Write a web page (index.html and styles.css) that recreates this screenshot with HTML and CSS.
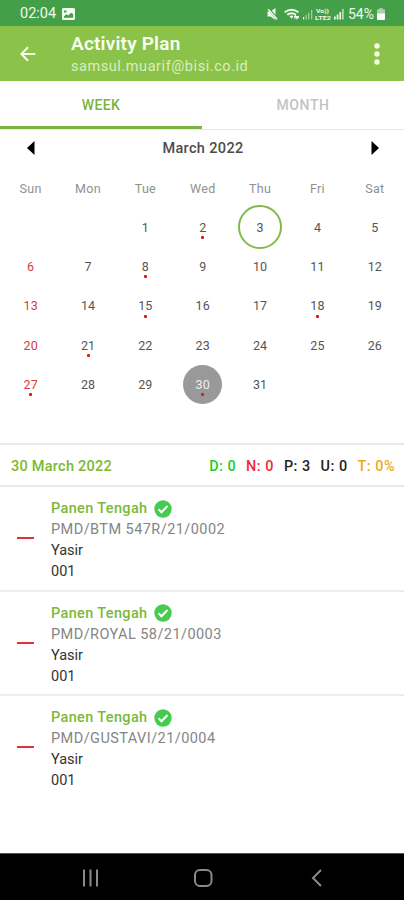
FILE: index.html
```html
<!DOCTYPE html>
<html lang="en">
<head>
<meta charset="utf-8">
<title>Activity Plan</title>
<link rel="stylesheet" href="styles.css">
</head>
<body>
<div class="screen">
  <div class="status">
    <span class="clock">02:04</span>
    <svg class="pic" width="13" height="12" viewBox="0 0 13 12"><path fill="#f4fff2" fill-rule="evenodd" d="M1.5 0h10A1.5 1.5 0 0 1 13 1.5v9a1.5 1.5 0 0 1-1.500 1.500h-10A1.500 1.500 0 0 1 0 10.500v-9A1.500 1.500 0 0 1 1.500 0zM2 9.800h9.200V6L9 4.800 6.300 7.500 4.500 6.300 2 8.300zM2 2.400v2h2.500v-2z"/></svg>
    <svg class="indicators" width="80" height="14" viewBox="0 0 80 14">
      <g fill="#f0faee">
        <path d="M.5 4.500h3L8.500 1v12L3.500 9.500h-3z"/>
        <path d="M17 4.500Q24.500-1 32 4.500L30.800 6Q24.500 1.600 18.200 6zM19.500 7Q24.500 3.400 29.500 7L28 8.500Q24.500 6 21 8.500zM22.500 9.200Q24.500 7.800 26.500 9.200L24.500 11.800z"/>
        <path d="M26.500 10l2.500-2.500V9h3v1.800zM32 10.500l-2.500 2.300v-1.300H27v-1z"/>
        <path d="M36 10h1.200v2.500H36z"/>
        <path opacity=".55" d="M38.500 8h1.300v4.500h-1.300zM41 5.500h1.300v7H41zM44 3h1.300v9.500H44z"/>
        <path d="M67 9.500h1.700v3H67zM69.700 7.500h1.700v5h-1.700z"/>
        <path d="M72.400 5h1.700v7.500h-1.700z"/>
        <path opacity=".65" d="M75.100 2h1.700v10.500h-1.700z"/>
        <text x="49" y="5.800" class="net" textLength="13" lengthAdjust="spacingAndGlyphs">Vo))</text>
        <text x="48" y="13" class="net" textLength="16" lengthAdjust="spacingAndGlyphs">LTE2</text>
      </g>
      <path d="M1 1.200l9.500 11" stroke="#43a047" stroke-width="2.600"/>
      <path d="M1.200 2.200l9 10" stroke="#f0faee" stroke-width="1.300"/>
    </svg>
    <span class="percent">54%</span>
    <svg class="battery" width="8" height="12" viewBox="0 0 8 12"><path fill="#a9d2a8" d="M2.500 0h3v1.300H7a1 1 0 0 1 1 1V6H0V2.300a1 1 0 0 1 1-1h1.500z"/><path fill="#fff" d="M0 5.500h8V11a1 1 0 0 1-1 1H1a1 1 0 0 1-1-1z"/></svg>
  </div>

  <header class="appbar">
    <svg class="back" width="16" height="16" viewBox="0 0 16 16"><path d="M15.300 8H1.500M8 1.300L1.300 8 8 14.700" fill="none" stroke="#f6ffe9" stroke-width="2"/></svg>
    <div class="heading">
      <h1>Activity Plan</h1>
      <p>samsul.muarif@bisi.co.id</p>
    </div>
    <svg class="more" width="6" height="22" viewBox="0 0 6 22"><g fill="#f6ffe9"><circle cx="3" cy="3" r="2.700"/><circle cx="3" cy="11" r="2.700"/><circle cx="3" cy="19" r="2.700"/></g></svg>
  </header>

  <nav class="tabs"><div class="tab active"><span>WEEK</span></div><div class="tab"><span>MONTH</span></div></nav>

  <div class="monthbar">
    <svg width="8" height="14" viewBox="0 0 8 14"><path d="M7.500 0v14L0 7z"/></svg>
    <span class="month">March 2022</span>
    <svg width="8" height="14" viewBox="0 0 8 14"><path d="M.5 0v14L8 7z"/></svg>
  </div>

  <div class="weekdays"><span>Sun</span><span>Mon</span><span>Tue</span><span>Wed</span><span>Thu</span><span>Fri</span><span>Sat</span></div>
  <div class="days">
    <div></div><div></div><div>1</div><div class="dot">2</div><div class="today">3</div><div>4</div><div>5</div>
    <div class="sun">6</div><div>7</div><div class="dot">8</div><div>9</div><div>10</div><div>11</div><div>12</div>
    <div class="sun">13</div><div>14</div><div class="dot">15</div><div>16</div><div>17</div><div class="dot">18</div><div>19</div>
    <div class="sun">20</div><div class="dot">21</div><div>22</div><div>23</div><div>24</div><div>25</div><div>26</div>
    <div class="sun dot">27</div><div>28</div><div>29</div><div class="dot selected">30</div><div>31</div><div></div><div></div>
  </div>

  <div class="summary">
    <span class="date">30 March 2022</span>
    <div class="counts"><span class="d">D: 0</span><span class="n">N: 0</span><span>P: 3</span><span>U: 0</span><span class="t">T: 0%</span></div>
  </div>

  <ul class="list">
    <li>
      <i class="dash"></i>
      <div class="info">
        <div class="name"><span>Panen Tengah</span><svg width="18" height="18" viewBox="0 0 18 18"><circle cx="9" cy="9" r="8.700" fill="#45cc50"/><path d="M4.500 9.300l3 3 6-6.300" fill="none" stroke="#fff" stroke-width="2"/></svg></div>
        <div class="code">PMD/BTM 547R/21/0002</div>
        <div class="person">Yasir</div>
        <div class="num">001</div>
      </div>
    </li>
    <li>
      <i class="dash"></i>
      <div class="info">
        <div class="name"><span>Panen Tengah</span><svg width="18" height="18" viewBox="0 0 18 18"><circle cx="9" cy="9" r="8.700" fill="#45cc50"/><path d="M4.500 9.300l3 3 6-6.300" fill="none" stroke="#fff" stroke-width="2"/></svg></div>
        <div class="code">PMD/ROYAL 58/21/0003</div>
        <div class="person">Yasir</div>
        <div class="num">001</div>
      </div>
    </li>
    <li>
      <i class="dash"></i>
      <div class="info">
        <div class="name"><span>Panen Tengah</span><svg width="18" height="18" viewBox="0 0 18 18"><circle cx="9" cy="9" r="8.700" fill="#45cc50"/><path d="M4.500 9.300l3 3 6-6.300" fill="none" stroke="#fff" stroke-width="2"/></svg></div>
        <div class="code">PMD/GUSTAVI/21/0004</div>
        <div class="person">Yasir</div>
        <div class="num">001</div>
      </div>
    </li>
  </ul>

  <footer class="navbar">
    <svg width="18" height="18" viewBox="0 0 18 18"><path d="M2 .5v17M8.500 .5v17M15 .5v17" stroke="#8a8a8a" stroke-width="2"/></svg>
    <svg width="20" height="20" viewBox="0 0 20 20"><rect x="1" y="2" width="16.500" height="16" rx="5" fill="none" stroke="#8a8a8a" stroke-width="2"/></svg>
    <svg width="18" height="18" viewBox="0 0 18 18"><path d="M13 1L5 9l8 8" fill="none" stroke="#8a8a8a" stroke-width="2"/></svg>
  </footer>
</div>
</body>
</html>
```
FILE: styles.css
```css
*, *::before, *::after { box-sizing: border-box; }
body { margin: 0; font-family: Roboto, sans-serif; background: #fff; color: #333; }
h1, p, ul { margin: 0; padding: 0; }
.screen { width: 404px; height: 900px; display: flex; flex-direction: column; overflow: hidden; }
.screen > * { flex-shrink: 0; }
.status { height: 26px; background: #439f48; display: flex; align-items: center; padding: 1px 19px 0 20px; color: #effaed; font-size: 14.5px; }
.pic { margin-left: 6px; }
.indicators { margin-left: auto; }
.net { font-size: 5.5px; font-weight: 700; }
.percent { margin-left: 1px; font-size: 14px; }
.battery { margin-left: 3px; }

.appbar { height: 55px; background: #8bc34a; display: flex; align-items: center; padding: 0 24px 0 20px; }
.heading { margin-left: 35px; padding-top: 3px; }
h1 { font-size: 19px; line-height: 24px; font-weight: 600; color: #f8fff0; letter-spacing: .2px; }
.heading p { font-size: 14.5px; line-height: 22px; color: #d9efbd; letter-spacing: .56px; }
.more { margin-left: auto; }

.tabs { height: 49px; display: flex; border-bottom: 1px solid #e6e6e6; }
.tab { flex: 1; height: 48px; border-bottom: 3px solid transparent; display: flex; align-items: center; justify-content: center; font-size: 14px; font-weight: 500; color: #c3c3c3; padding-top: 3px; letter-spacing: .6px; }
.active { color: #7cb342; border-bottom-color: #7cb342; letter-spacing: .4px; }

.monthbar { height: 36px; display: flex; align-items: center; justify-content: space-between; padding: 0 25px 0 27px; }
.month { font-size: 14.5px; font-weight: 500; letter-spacing: .35px; color: #4c4c4c; }
.weekdays, .days { display: grid; grid-template-columns: repeat(7, 1fr); padding: 0 0 0 2px; text-align: center; }
.weekdays { height: 41.500px; padding-top: 13px; padding-right: .5px; font-size: 12.5px; line-height: 20px; color: #909090; letter-spacing: .3px; }
.days { grid-auto-rows: 39.3px; justify-items: center; height: 235.500px; padding-right: .5px; font-size: 12.5px; color: #555; letter-spacing: .1px; }
.days div { position: relative; display: flex; align-items: center; justify-content: center; width: 44px; }
.days .sun { color: #d33e3e; }
.days .dot::after { content: ""; position: absolute; left: 20.5px; top: 28.5px; width: 3px; height: 3px; border-radius: 1px; background: #dc1919; }
.days .today::before { content: ""; position: absolute; left: 0; top: -2.500px; width: 44px; height: 44px; border: 2px solid #83b94a; border-radius: 50%; }
.days .selected { width: 39.3px; border-radius: 50%; background: #999; color: #eee; }
.days .selected::after { left: 18px; }

.summary { height: 44px; border-top: 2px solid #e8e8e8; border-bottom: 2px solid #e8e8e8; display: flex; align-items: center; justify-content: space-between; padding: 2px 9px 0 11px; font-size: 14.5px; font-weight: 500; }
.date { color: #7cb932; letter-spacing: .25px; }
.counts { display: flex; gap: 10px; color: #222; font-size: 14.4px; letter-spacing: .5px; }
.d { color: #16cf28; }
.n { color: #ee2a35; }
.t { color: #f0a81c; }

.list { list-style: none; flex: 1; }
.list li { height: 104.500px; display: flex; align-items: flex-start; padding: 11px 0 0 17px; border-bottom: 2px solid #ededed; }
.list li:last-child { border-bottom-color: transparent; }
.dash { width: 17px; height: 2px; margin-top: 39px; background: #e5303a; }
.info { margin-left: 17px; }
.info div { height: 21px; line-height: 21px; font-size: 14.5px; white-space: nowrap; }
.info .name { display: flex; align-items: center; gap: 7px; color: #7cb93a; font-weight: 500; letter-spacing: .35px; }
.info .code { color: #858585; letter-spacing: .44px; }
.info .person, .info .num { color: #333; }

.navbar { height: 47px; background: #000; border-top: 1px solid #555; display: flex; align-items: center; padding: 2px 78px 0 82px; justify-content: space-between; }
```
